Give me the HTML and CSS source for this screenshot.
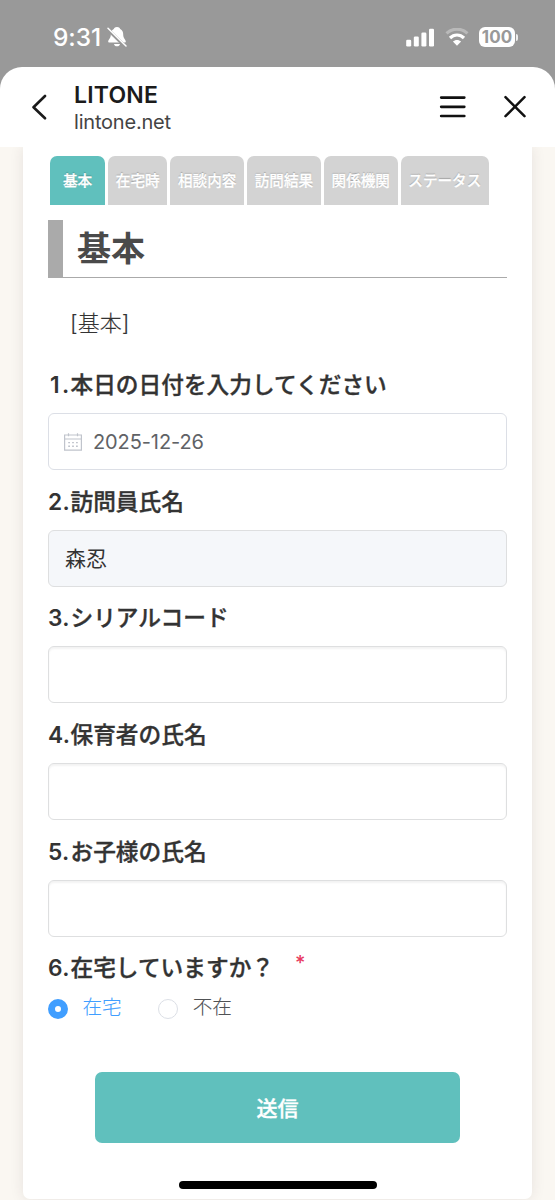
FILE: index.html
```html
<!DOCTYPE html>
<html lang="ja">
<head>
<meta charset="utf-8">
<meta name="viewport" content="width=device-width, initial-scale=1">
<title>LITONE</title>
<link rel="stylesheet" href="styles.css">
</head>
<body>
<div class="screen">
  <div class="status">
    <div class="status-left">
      <span class="clock">9:31</span>
      <svg class="bell" width="20" height="22" viewBox="0 0 20 22">
        <path d="M10 1C7.8 1 6.9 2.5 6.8 3C4.6 4 3.8 6 3.8 8.5C3.8 12.5 1.2 13.7 1.2 15.4C1.2 16.1 1.6 16.5 2.4 16.5H17.6C18.4 16.5 18.8 16.1 18.8 15.4C18.8 13.7 16.2 12.5 16.2 8.5C16.2 6 15.4 4 13.2 3C13.1 2.5 12.2 1 10 1ZM7 18H13C12.7 19.4 11.6 20.3 10 20.3S7.3 19.4 7 18Z" fill="#fff"/>
        <path d="M0 2.6L18.4 20.6" stroke="#999" stroke-width="3.4"/>
        <path d="M1 2.3L19 20" stroke="#fff" stroke-width="1.5" stroke-linecap="round"/>
      </svg>
    </div>
    <div class="status-right">
      <svg width="29" height="19" viewBox="0 0 29 19" fill="#fff">
        <rect x="0.2" y="11.8" width="5" height="6.7" rx="1.3"/>
        <rect x="7.8" y="8.5" width="5" height="10" rx="1.3"/>
        <rect x="15.4" y="4.5" width="5" height="14" rx="1.3"/>
        <rect x="23" y="0.7" width="5" height="17.8" rx="1.3"/>
      </svg>
      <svg class="wifi" width="24" height="18" viewBox="0 0 24 18" fill="none">
        <path d="M1.5 5.4C7.3-.3 16.7-.3 22.5 5.4" stroke="#b9b9b9" stroke-width="3"/>
        <path d="M5 10C9 6 15 6 19 10" stroke="#fff" stroke-width="3.2"/>
        <path d="M12 17.8L7.9 13.6C10.2 11.4 13.8 11.4 16.1 13.6Z" fill="#fff"/>
      </svg>
      <div class="battery"><span class="level">100</span><span class="nub"></span></div>
    </div>
  </div>

  <header class="bar">
    <svg class="back" width="16" height="26" viewBox="0 0 16 26"><path d="M14 2L2.5 13.2L14 24.3" fill="none" stroke="#1b1b1b" stroke-width="2.6" stroke-linecap="round" stroke-linejoin="round"/></svg>
    <div class="site">
      <div class="site-name">LITONE</div>
      <div class="site-host">lintone.net</div>
    </div>
    <svg class="menu" width="28" height="24" viewBox="0 0 28 24"><path d="M2.2 2.6H25.3M2.2 11.8H25.3M2.2 21H25.3" stroke="#111" stroke-width="2.7" stroke-linecap="round"/></svg>
    <svg class="close" width="24" height="24" viewBox="0 0 24 24"><path d="M2.5 2.2L21.5 21.2M21.5 2.2L2.5 21.2" stroke="#111" stroke-width="2.5" stroke-linecap="round"/></svg>
  </header>

  <main class="page">
    <div class="card">
      <nav class="tabs">
        <span class="tab tab-active">基本</span>
        <span class="tab">在宅時</span>
        <span class="tab">相談内容</span>
        <span class="tab">訪問結果</span>
        <span class="tab">関係機関</span>
        <span class="tab">ステータス</span>
      </nav>
      <h1 class="title">基本</h1>
      <p class="section">[基本]</p>

      <div class="question">
        <label class="label"><span class="num num-first">1.</span>本日の日付を入力してください</label>
        <div class="field field-date">
          <svg width="18" height="18" viewBox="0 0 18 18" fill="none" stroke="#c0c4cc">
            <path d="M.6 2H17.4V17.1H.6ZM.6 6H17.4" stroke-width="1.2"/>
            <path d="M4.5 .3V3.2M13.5 .3V3.2" stroke-width="1.2"/>
            <path d="M4.2 9.6H6M8.1 9.6H9.9M12 9.6H13.8M4.2 13.2H6M8.1 13.2H9.9M12 13.2H13.8" stroke-width="1.4"/>
          </svg>
          <span>2025-12-26</span>
        </div>
      </div>
      <div class="question">
        <label class="label"><span class="num">2.</span>訪問員氏名</label>
        <div class="field field-disabled">森忍</div>
      </div>
      <div class="question">
        <label class="label"><span class="num">3.</span>シリアルコード</label>
        <div class="field"></div>
      </div>
      <div class="question">
        <label class="label"><span class="num">4.</span>保育者の氏名</label>
        <div class="field"></div>
      </div>
      <div class="question">
        <label class="label"><span class="num">5.</span>お子様の氏名</label>
        <div class="field"></div>
      </div>
      <div class="question-last">
        <label class="label"><span class="num">6.</span>在宅していますか？<span class="required">*</span></label>
        <div class="radios">
          <span class="radio radio-on"><i class="dot"></i><span class="radio-text">在宅</span></span>
          <span class="radio"><i class="dot"></i><span class="radio-text">不在</span></span>
        </div>
      </div>
      <div class="submit">送信</div>
    </div>
  </main>
  <div class="home-indicator"></div>
</div>
</body>
</html>
```

FILE: styles.css
```css
* { box-sizing: border-box; }
body {
  margin: 0;
  background: #999;
  font-family: Inter, "Noto Sans CJK JP", sans-serif;
  color: #333;
}
.screen {
  position: relative;
  width: 555px;
  height: 1200px;
  display: flex;
  flex-direction: column;
  overflow: hidden;
}

.status {
  flex: none;
  height: 67px;
  padding: 7px 37px 0 53px;
  display: flex;
  align-items: center;
  justify-content: space-between;
  color: #fff;
}
.status-left, .status-right { display: flex; align-items: center; }
.clock { font-size: 24.5px; font-weight: 500; line-height: 30px; letter-spacing: -.1px; }
.bell { margin-left: 6px; }
.wifi { margin: 0 10px 0 10px; }
.battery { display: flex; align-items: center; gap: 1px; }
.level {
  width: 36px;
  height: 20px;
  border-radius: 6px;
  background: #fff;
  color: #999;
  font-size: 17px;
  font-weight: 700;
  line-height: 20px;
  text-align: center;
}
.nub { width: 2px; height: 7px; border-radius: 0 2px 2px 0; background: #eee; }

.bar {
  position: relative;
  z-index: 1;
  flex: none;
  height: 80px;
  padding: 0 28px 0 31px;
  border-radius: 22px 22px 0 0;
  background: #fff;
  display: flex;
  align-items: center;
}
.site { margin: 2px auto 0 27px; }
.site-name { font-size: 23px; font-weight: 600; line-height: 27px; color: #1b1b1b; letter-spacing: .2px; }
.site-host { font-size: 20px; line-height: 26px; color: #444; letter-spacing: -.2px; }
.menu { margin-right: 36px; }

.page {
  flex: none;
  height: 1053px;
  padding: 0 23px;
  background: #faf7f2;
}
.card {
  height: 1052px;
  padding: 8px 25px 0;
  border-radius: 0 0 7px 7px;
  background: #fff;
  box-shadow: 0 0 14px rgba(60, 40, 50, .1);
}
.tabs { display: flex; gap: 2.8px; padding-left: 2px; height: 48.5px; margin-top: 1px; }
.tab {
  padding: 0 7.8px;
  border-radius: 7px 7px 0 0;
  background: #d3d3d3;
  color: #fff;
  font-size: 14.6px;
  font-weight: 500;
  line-height: 50px;
  white-space: nowrap;
  text-shadow: 0 -1px 1px rgba(0, 0, 0, .25);
  -webkit-text-stroke: .3px #fff;
}
.tab-active { padding: 0 13px; background: #60c0bd; }

.title {
  margin: 15.5px 0 0;
  height: 58px;
  padding-left: 14px;
  border-left: 15px solid #aaa;
  border-bottom: 1.5px solid #aaa;
  font-size: 34px;
  line-height: 58px;
  font-weight: 700;
  color: #4a4a4a;
}
.section {
  margin: 28px 0 0 22px;
  font-size: 22px;
  font-weight: 300;
  line-height: 34px;
  color: #333;
  -webkit-text-stroke: .15px #333;
}
.question { height: 116.7px; }
.section + .question { margin-top: 27px; }
.label {
  display: block;
  height: 46px;
  line-height: 36px;
  font-size: 22.7px;
  font-weight: 500;
  white-space: nowrap;
  -webkit-text-stroke: .35px #333;
}
.num { display: inline-block; width: 22.5px; font-weight: 600; letter-spacing: .4px; -webkit-text-stroke: 0; }
.num-first { padding-left: 2px; letter-spacing: 2.5px; }
.field {
  height: 57px;
  padding: 0 16px;
  border: 1.5px solid #dedfe0;
  border-radius: 6px;
  background: #fff;
  box-shadow: inset 0 2px 2px rgba(0, 0, 0, .05);
  font-size: 21px;
  line-height: 56px;
}
.field-date {
  padding: 0 15px;
  display: flex;
  align-items: center;
  gap: 11px;
  border-color: #dcdfe6;
  box-shadow: none;
  color: #606266;
  font-size: 20px;
  letter-spacing: -.1px;
}
.field-disabled { background: #f5f7fa; box-shadow: none; }
.required {
  display: inline-block;
  height: 36px;
  margin: -3px 0 0 21px;
  color: #e83a5f;
  font-size: 20px;
  line-height: 32px;
  vertical-align: top;
  -webkit-text-stroke: 0;
}
.radios { display: flex; gap: 36.5px; height: 30px; margin-top: -6px; }
.radio { display: flex; gap: 14.5px; color: #505255; font-size: 19.6px; font-weight: 300; line-height: 34px; -webkit-text-stroke: .1px; }
.dot { width: 20px; height: 20px; margin-top: 8.5px; border: 1.5px solid #dcdfe6; border-radius: 50%; }
.radio-on { color: #409eff; }
.radio-on .dot { border: 7px solid #409eff; background: #fff; }
.submit {
  width: 365px;
  height: 71px;
  margin: 51.5px auto 0;
  border-radius: 7px;
  background: #60c0bd;
  color: #fff;
  font-size: 21px;
  font-weight: 500;
  line-height: 73px;
  text-align: center;
  -webkit-text-stroke: .35px #fff;
}
.home-indicator {
  position: absolute;
  left: 179px;
  bottom: 11px;
  width: 198px;
  height: 8px;
  border-radius: 4px;
  background: #000;
}
```
